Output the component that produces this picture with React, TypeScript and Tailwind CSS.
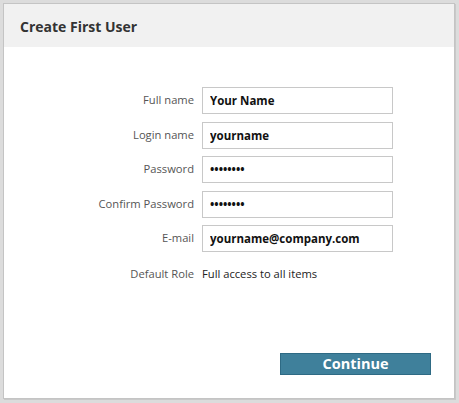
import React from 'react';

const fields = [
  { label: 'Full name', value: 'Your Name', type: 'text' },
  { label: 'Login name', value: 'yourname', type: 'text' },
  { label: 'Password', value: 'password', type: 'password' },
  { label: 'Confirm Password', value: 'password', type: 'password' },
  { label: 'E-mail', value: 'yourname@company.com', type: 'text' },
];

export default function App() {
  return (
    <div
      className="w-[459px] h-[403px] bg-[#dcdcdc] p-[3px] pr-[4px] pb-[4px]"
      style={{ fontFamily: '"Open Sans", "Liberation Sans", sans-serif' }}
    >
      <div className="h-full bg-white border border-[#c4c4c4] shadow-[1px_1px_0_#c9c9c9] flex flex-col">
        {/* Header */}
        <div className="h-[43px] bg-[#f1f1f1] flex items-center pl-[16px] pt-[1px]">
          <h1 className="text-[14px] font-bold text-[#333]">Create First User</h1>
        </div>

        {/* Form */}
        <div className="flex flex-col gap-[7.5px] pt-[40px]">
          {fields.map((f) => (
            <div key={f.label} className="flex items-center">
              <label className="w-[190px] text-right text-[11.2px] text-[#555]">{f.label}</label>
              <input
                type={f.type}
                defaultValue={f.value}
                readOnly
                className="ml-[8px] w-[191px] h-[27px] border border-[#c8c8c8] px-[7px] text-[11.5px] font-bold text-[#111] outline-none"
                style={{ fontFamily: '"Open Sans", "Liberation Sans", sans-serif' }}
              />
            </div>
          ))}
          <div className="flex items-center mt-[6px]">
            <span className="w-[190px] text-right text-[11.2px] text-[#555]">Default Role</span>
            <span className="ml-[8px] text-[11.2px] text-[#222]">Full access to all items</span>
          </div>
        </div>

        <div className="flex-1" />

        {/* Footer */}
        <div className="flex justify-end pr-[23px] pb-[23px]">
          <button className="w-[151px] h-[22px] bg-[#3f809b] border border-[#2e6a84] text-white text-[14.5px] font-bold leading-none flex items-center justify-center">
            Continue
          </button>
        </div>
      </div>
    </div>
  );
}
